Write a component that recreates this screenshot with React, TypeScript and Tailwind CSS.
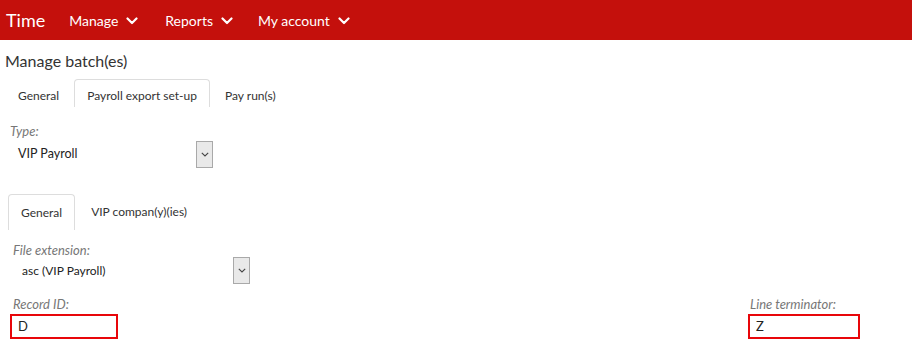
import React from "react";

function Chevron() {
  return (
    <svg width="12" height="8" viewBox="0 0 12 8" className="ml-[8px] mt-[1px]">
      <path d="M1.5 1.5 L6 6 L10.5 1.5" fill="none" stroke="white" strokeWidth="2.2" strokeLinecap="round" strokeLinejoin="round" />
    </svg>
  );
}

function SelectArrow() {
  return (
    <div className="w-[17px] h-[27px] border border-[#a9a9a9] bg-[#e9e9e9] flex items-center justify-center">
      <svg width="8" height="5" viewBox="0 0 8 5">
        <path d="M0.8 0.8 L4 4 L7.2 0.8" fill="none" stroke="#444" strokeWidth="1.1" />
      </svg>
    </div>
  );
}

export default function App() {
  return (
    <div className="w-[912px] h-[351px] bg-white overflow-hidden" style={{ fontFamily: "Lato, 'Open Sans', sans-serif" }}>
      <div className="h-[40px] bg-[#c4100c] flex items-center text-white">
        <div className="pl-[6px] text-[18px] leading-none mb-[1px]">Time</div>
        <div className="flex items-center ml-[24px] text-[14px]">
          <span>Manage</span>
          <Chevron />
        </div>
        <div className="flex items-center ml-[27px] text-[14px]">
          <span>Reports</span>
          <Chevron />
        </div>
        <div className="flex items-center ml-[25px] text-[14px]">
          <span>My account</span>
          <Chevron />
        </div>
      </div>

      <div className="pl-[5px] pt-[11px] text-[16px] leading-[20px] text-[#333]">Manage batch(es)</div>

      <div className="flex mt-[8px] pl-[5px] text-[12px] text-[#333] h-[28px]">
        <div className="pl-[13px] pr-[15px] pt-[8px]">General</div>
        <div className="px-[12px] pt-[7px] border border-b-0 border-[#ddd] rounded-t-[4px]">Payroll export set-up</div>
        <div className="px-[15px] pt-[8px]">Pay run(s)</div>
      </div>

      <div className="pl-[10px] pt-[16px]">
        <div className="text-[13px] italic text-[#777] leading-[16px]">Type:</div>
        <div className="flex items-center mt-[2px] w-[203px] justify-between">
          <span className="pl-[8px] text-[12.5px] text-[#222]">VIP Payroll</span>
          <SelectArrow />
        </div>
      </div>

      <div className="flex mt-[26px] pl-[8px] text-[12px] text-[#333] h-[36px]">
        <div className="px-[12px] pt-[9px] border border-b-0 border-[#ddd] rounded-t-[4px]">General</div>
        <div className="px-[16px] pt-[9px]">VIP compan(y)(ies)</div>
      </div>

      <div className="pl-[13px] pt-[12px]">
        <div className="text-[13px] italic text-[#777] leading-[16px]">File extension:</div>
        <div className="flex items-center -mt-[1px] w-[237px] justify-between">
          <span className="pl-[9px] text-[12px] text-[#222]">asc (VIP Payroll)</span>
          <SelectArrow />
        </div>
      </div>

      <div className="flex justify-between pt-[12px] pl-[10px] pr-[52px]">
        <div>
          <div className="pl-[3px] text-[13px] italic text-[#777] leading-[16px]">Record ID:</div>
          <div className="w-[108px] h-[25px] mt-[2px] border-2 border-[#e8060a] flex items-center pl-[6px] text-[13px] text-[#222]">D</div>
        </div>
        <div>
          <div className="pl-[2px] text-[13px] italic text-[#777] leading-[16px]">Line terminator:</div>
          <div className="w-[112px] h-[25px] mt-[2px] border-2 border-[#e8060a] flex items-center pl-[6px] text-[13px] text-[#222]">Z</div>
        </div>
      </div>
    </div>
  );
}
